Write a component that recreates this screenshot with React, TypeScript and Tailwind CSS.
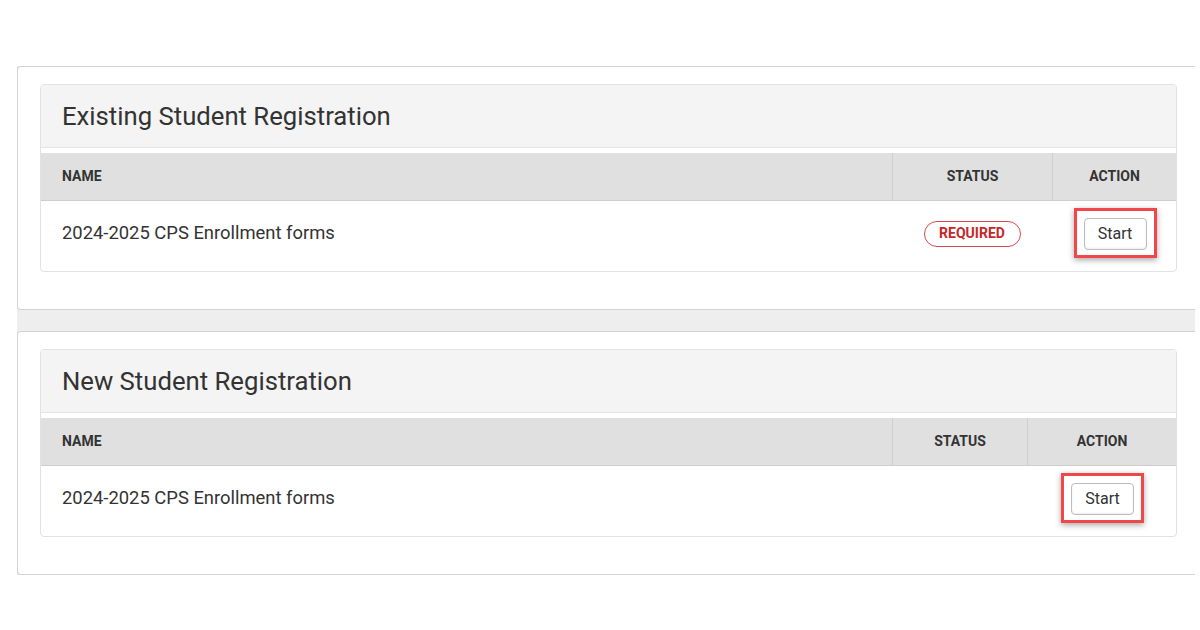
import React from "react";

type Row = { name: string; required?: boolean };

function StartButton() {
  return (
    <div className="border-[3px] border-[#f0474a] pt-[7px] pb-[5px] px-[7px] shadow-[0_2px_6px_rgba(0,0,0,0.35)]">
      <button className="w-[63px] h-[32px] rounded-[4px] border border-[#bdbdbd] bg-white text-[16px] text-[#333] shadow-[inset_0_-1px_2px_rgba(0,0,0,0.08)]">
        Start
      </button>
    </div>
  );
}

function RegistrationCard({
  title,
  rows,
  statusW,
  actionW,
}: {
  title: string;
  rows: Row[];
  statusW: string;
  actionW: string;
}) {
  return (
    <div className="border border-[#e2e2e2] rounded-[4px] bg-white overflow-hidden">
      <div className="h-[63px] bg-[#f4f4f4] border-b border-[#e4e4e4] pl-[21px] flex items-center">
        <h2 className="text-[25.7px] text-[#333]">{title}</h2>
      </div>
      <div className="mt-[5px]">
        <div className="flex h-[48px] bg-[#e0e0e0] border-b border-[#cdcdcd] text-[14px] font-bold text-[#333] uppercase">
          <div className="flex-1 pl-[21px] flex items-center">Name</div>
          <div className={`${statusW} border-l border-[#cfcfcf] flex items-center justify-center`}>
            Status
          </div>
          <div className={`${actionW} border-l border-[#cfcfcf] flex items-center justify-center`}>
            Action
          </div>
        </div>
        {rows.map((r) => (
          <div key={r.name} className="flex h-[70px] items-center text-[18.4px] text-[#333]">
            <div className="flex-1 pl-[21px] pb-[6px]">{r.name}</div>
            <div className={`${statusW} flex items-center justify-center pb-[5px]`}>
              {r.required && (
                <span className="w-[97px] h-[26px] rounded-full border-[1.5px] border-[#d9484c] text-[#c62828] text-[14px] font-bold flex items-center justify-center">
                  REQUIRED
                </span>
              )}
            </div>
            <div className={`${actionW} flex items-center justify-center pl-[2px] pb-[6px]`}>
              <StartButton />
            </div>
          </div>
        ))}
      </div>
    </div>
  );
}

function Panel({ children }: { children: React.ReactNode }) {
  return (
    <div className="bg-white border border-r-0 border-[#d3d3d3] rounded-l-[4px] pt-[17px] pl-[22px] pr-[18px] pb-[37px]">
      {children}
    </div>
  );
}

export default function App() {
  return (
    <div
      className="w-[1200px] h-[630px] bg-white pt-[66px] pl-[17px]"
      style={{ fontFamily: "Roboto, 'Liberation Sans', sans-serif" }}
    >
      <div className="w-[1178px] bg-[#eeeeee] flex flex-col gap-[21px]">
        <Panel>
          <RegistrationCard
            title="Existing Student Registration"
            rows={[{ name: "2024-2025 CPS Enrollment forms", required: true }]}
            statusW="w-[160px]"
            actionW="w-[124px]"
          />
        </Panel>
        <Panel>
          <RegistrationCard
            title="New Student Registration"
            rows={[{ name: "2024-2025 CPS Enrollment forms" }]}
            statusW="w-[135px]"
            actionW="w-[149px]"
          />
        </Panel>
      </div>
    </div>
  );
}
